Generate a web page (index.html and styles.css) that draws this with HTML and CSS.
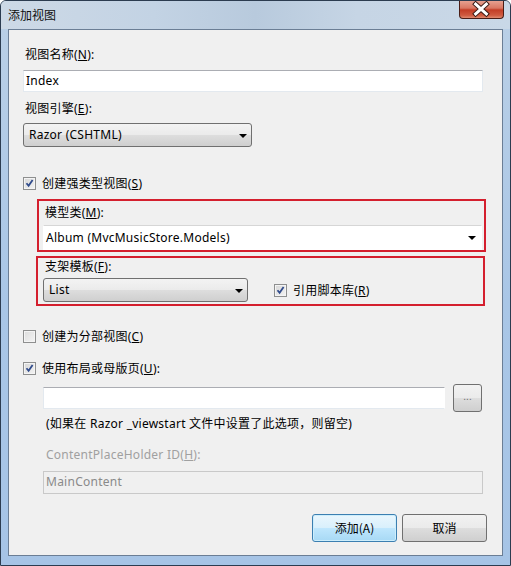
FILE: index.html
```html
<!DOCTYPE html>
<html lang="zh-CN">
<head>
<meta charset="utf-8">
<title>添加视图</title>
<link rel="stylesheet" href="styles.css">
</head>
<body>
<div class="window">
  <div class="titlebar">
    <span class="title">添加视图</span>
    <div class="close">
      <svg width="45" height="19" viewBox="0 0 45 19">
        <path d="M17 4 L28 14 M28 4 L17 14" stroke="#3a1a14" stroke-width="5" stroke-linecap="square"/>
        <path d="M17 4 L28 14 M28 4 L17 14" stroke="#ffffff" stroke-width="3" stroke-linecap="square"/>
      </svg>
    </div>
  </div>
  <div class="client">
    <div class="label l-name">视图名称(<u>N</u>):</div>
    <div class="textbox tb-name">Index</div>

    <div class="label l-engine">视图引擎(<u>E</u>):</div>
    <div class="select sel-engine"><span>Razor (CSHTML)</span><i class="arrow"></i></div>

    <div class="check c-strong">
      <span class="box checked"></span><span>创建强类型视图(<u>S</u>)</span>
    </div>

    <div class="redbox rb-model">
      <div class="label l-model">模型类(<u>M</u>):</div>
      <div class="combo"><span>Album (MvcMusicStore.Models)</span><i class="arrow"></i></div>
    </div>

    <div class="redbox rb-scaffold">
      <div class="label l-scaffold">支架模板(<u>F</u>):</div>
      <div class="scaffold-row">
        <div class="select sel-list"><span>List</span><i class="arrow"></i></div>
        <div class="check c-script">
          <span class="box checked"></span><span>引用脚本库(<u>R</u>)</span>
        </div>
      </div>
    </div>

    <div class="check c-partial">
      <span class="box"></span><span>创建为分部视图(<u>C</u>)</span>
    </div>

    <div class="check c-layout">
      <span class="box checked"></span><span>使用布局或母版页(<u>U</u>):</span>
    </div>

    <div class="layout-row">
      <div class="textbox tb-layout"></div>
      <div class="btn browse">...</div>
    </div>

    <div class="hint">(如果在 Razor _viewstart 文件中设置了此选项，则留空)</div>

    <div class="label disabled l-cph">ContentPlaceHolder ID(<u>H</u>):</div>
    <div class="textbox tb-cph">MainContent</div>

    <div class="actions">
      <div class="btn primary">添加(A)</div>
      <div class="btn">取消</div>
    </div>
  </div>
</div>
</body>
</html>
```

FILE: styles.css
```css
html, body {
  margin: 0;
  padding: 0;
}
body {
  width: 511px;
  height: 566px;
  overflow: hidden;
  font-family: "Noto Sans", "Noto Sans CJK SC", sans-serif;
  font-size: 12px;
  letter-spacing: 0.25px;
  color: #000;
}
u { text-decoration: underline; text-underline-offset: 1px; }

.window {
  width: 511px;
  height: 566px;
  box-sizing: border-box;
  background: linear-gradient(180deg, #c4d5e8 0px, #b9cfe6 30px, #a9c6e6 300px, #a6c4e6 566px);
  border: 1px solid #2c3c50;
  border-radius: 6px 6px 0 0;
  display: flex;
  flex-direction: column;
  overflow: hidden;
}

.titlebar {
  height: 28px;
  display: flex;
  justify-content: space-between;
  align-items: flex-start;
  background: linear-gradient(90deg, #cdd9e6 0%, #c3d3e4 30%, #b8cadd 50%, #c6d5e5 70%, #c9d8e7 100%);
}
.title {
  margin: 6px 0 0 7px;
  font-family: "Noto Sans CJK SC", sans-serif;
  font-size: 12px;
  line-height: 16px;
  letter-spacing: 0;
  color: #101010;
}
.close {
  width: 45px;
  height: 19px;
  margin-right: 6px;
  margin-top: -1px;
  box-sizing: border-box;
  border: 1px solid #4a1d16;
  border-top: none;
  border-radius: 0 0 4px 4px;
  background: linear-gradient(180deg, #e9a696 0%, #d97763 45%, #c33d26 55%, #cf5a3f 85%, #e08a70 100%);
  display: flex;
}
.close svg { display: block; margin-left: -1px; }

.client {
  margin: 0 7px;
  height: 527px;
  box-sizing: border-box;
  background: #f0f0f0;
  border: 1px solid #6b7e95;
  padding: 0 19px 0 14px;
  display: flex;
  flex-direction: column;
  align-items: flex-start;
}

.label {
  height: 16px;
  line-height: 16px;
  padding-left: 2px;
  white-space: nowrap;
}
.label.disabled { color: #a0a0a0; }
.l-name { margin-top: 17px; }
.l-engine { margin-top: 9px; }

.textbox {
  box-sizing: border-box;
  height: 22px;
  line-height: 20px;
  padding-left: 2px;
  background: #fff;
  border: 1px solid #e3e9ef;
  border-top-color: #abadb3;
  white-space: nowrap;
}
.tb-name { margin-top: 7px; width: 460px; }

.select {
  box-sizing: border-box;
  height: 24px;
  line-height: 22px;
  padding-left: 5px;
  border: 1px solid #707070;
  border-radius: 3px;
  background: linear-gradient(180deg, #f3f3f3 0%, #ebebeb 48%, #dddddd 52%, #cfcfcf 100%);
  display: flex;
  justify-content: space-between;
  align-items: center;
  white-space: nowrap;
}
.sel-engine { margin-top: 6px; width: 229px; }
.arrow {
  width: 0;
  height: 0;
  border-left: 4px solid transparent;
  border-right: 4px solid transparent;
  border-top: 4px solid #000;
  margin-right: 4px;
  margin-top: 1px;
}

.check {
  display: flex;
  align-items: center;
  height: 16px;
  white-space: nowrap;
}
.box {
  width: 13px;
  height: 13px;
  box-sizing: border-box;
  border: 1px solid #8e8f8f;
  background: linear-gradient(135deg, #dcdcdc 0%, #f4f4f4 100%);
  box-shadow: inset 0 0 0 1px #f4f4f4;
  margin-right: 6px;
  flex: none;
}
.box.checked {
  background:
    url("data:image/svg+xml;utf8,<svg xmlns='http://www.w3.org/2000/svg' width='11' height='11' viewBox='0 0 11 11'><path d='M2.5 5.2 L4.6 7.8 L8.6 2' fill='none' stroke='%23314c8c' stroke-width='1.8'/></svg>") center/11px 11px no-repeat,
    linear-gradient(135deg, #d6d6d6 0%, #f4f4f4 100%);
}
.c-strong { margin-top: 28px; margin-left: 0; }

.redbox {
  box-sizing: border-box;
  border: 2px solid #d41f2e;
  display: flex;
  flex-direction: column;
  align-items: flex-start;
}
.rb-model {
  margin-top: 8px;
  margin-left: 14px;
  width: 449px;
  height: 53px;
  padding: 4px 2px 0 4px;
}
.combo {
  margin-top: 4px;
  margin-left: 0;
  box-sizing: border-box;
  width: 439px;
  height: 25px;
  line-height: 23px;
  padding-left: 2px;
  background: #fff;
  border: 1px solid #ffffff;
  border-top-color: #d6d6d6;
  display: flex;
  justify-content: space-between;
  align-items: center;
  white-space: nowrap;
}
.combo .arrow { margin-right: 5px; }

.rb-scaffold {
  margin-top: 4px;
  margin-left: 13px;
  width: 449px;
  height: 50px;
  padding: 1px 2px 0 5px;
}
.scaffold-row {
  margin-top: 3px;
  display: flex;
  align-items: center;
}
.sel-list { width: 205px; }
.c-script { margin-left: 26px; }

.c-partial { margin-top: 22px; }
.c-layout { margin-top: 16px; }

.layout-row {
  margin-top: 8px;
  margin-left: 20px;
  display: flex;
  align-items: center;
}
.tb-layout { width: 402px; border-right-color: #ffffff; }
.btn {
  box-sizing: border-box;
  width: 85px;
  height: 28px;
  line-height: 26px;
  text-align: center;
  border: 1px solid #707070;
  border-radius: 3px;
  background: linear-gradient(180deg, #f2f2f2 0%, #ebebeb 48%, #dddddd 52%, #cfcfcf 100%);
  font-family: "Noto Sans CJK SC", sans-serif;
  letter-spacing: 0;
  white-space: nowrap;
}
.browse {
  width: 29px;
  margin-left: 8px;
  line-height: 22px;
  font-size: 10px;
  color: #777;
}
.hint {
  margin-top: 4px;
  margin-left: 23px;
  height: 16px;
  line-height: 16px;
  white-space: nowrap;
}
.l-cph { margin-top: 15px; margin-left: 21px; }
.tb-cph {
  margin-top: 8px;
  margin-left: 20px;
  width: 440px;
  height: 23px;
  background: #f0f0f0;
  border: 1px solid #c9c9c9;
  color: #8a8a8a;
  padding-left: 2px;
}

.actions {
  margin-top: 20px;
  align-self: flex-end;
  margin-right: -4px;
  display: flex;
  gap: 5px;
}
.btn.primary {
  border-color: #3c7fb1;
  background: linear-gradient(180deg, #eaf6fd 0%, #d9f0fc 48%, #bee6fd 52%, #a7d9f5 100%);
  box-shadow: inset 0 0 0 1px #cdeefc;
}
```
